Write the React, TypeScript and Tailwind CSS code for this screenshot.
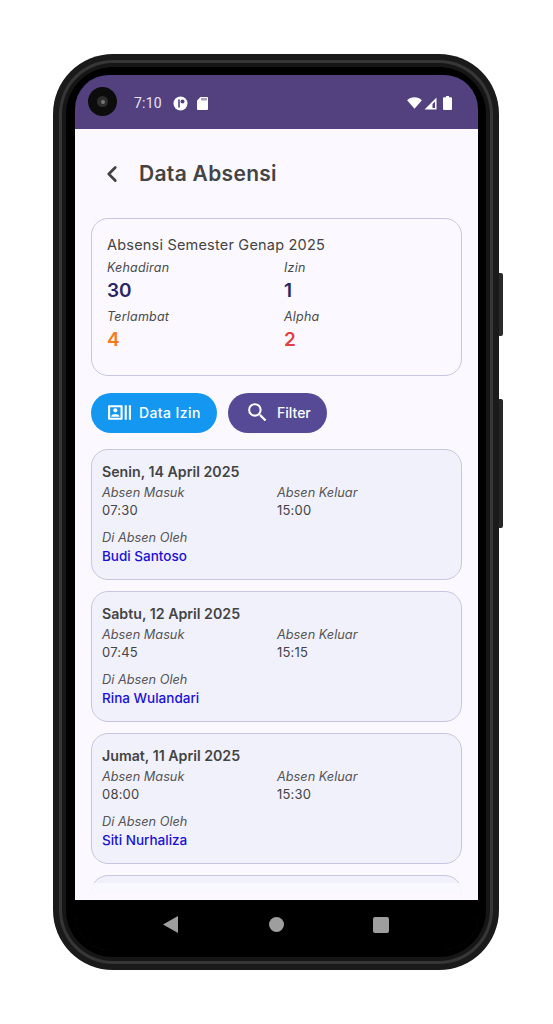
import { ChevronLeft } from 'lucide-react';
import { MdOutlineRecentActors, MdSearch } from 'react-icons/md';

const records = [
  { date: 'Senin, 14 April 2025', masuk: '07:30', keluar: '15:00', by: 'Budi Santoso' },
  { date: 'Sabtu, 12 April 2025', masuk: '07:45', keluar: '15:15', by: 'Rina Wulandari' },
  { date: 'Jumat, 11 April 2025', masuk: '08:00', keluar: '15:30', by: 'Siti Nurhaliza' },
];

function Stat({ label, value, color }: { label: string; value: string; color: string }) {
  return (
    <div className="h-[49px]">
      <div className="h-[20px] text-[12.5px] leading-[20px] italic text-[#4a4a4a] tracking-[0.2px]">{label}</div>
      <div className={`h-[26px] text-[19px] leading-[26px] font-semibold ${color}`}>{value}</div>
    </div>
  );
}

function StatusIcons() {
  return (
    <div className="flex items-center ml-auto mr-[26px]">
      <svg width="15" height="12" viewBox="0 0 16 13" fill="white">
        <path d="M0 3.6C2 1.6 5 .4 8 .4s6 1.2 8 3.2L8 12.6z" />
      </svg>
      <svg width="13" height="13" viewBox="0 0 13 13" fill="white" className="ml-[2px]">
        <path fillRule="evenodd" d="M12.5 .5V12.5H.5zM11 4.5 8.5 7V11H11z" />
      </svg>
      <svg width="9" height="14" viewBox="0 0 9 14" fill="white" className="ml-[6px]">
        <path d="M3 0h3v1.2h2a1 1 0 0 1 1 1V13a1 1 0 0 1-1 1H1a1 1 0 0 1-1-1V2.2a1 1 0 0 1 1-1h2z" />
      </svg>
    </div>
  );
}

export default function App() {
  return (
    <div className="h-[1024px] w-[553px] bg-white pt-[54px] pl-[53px] font-['Inter',sans-serif] overflow-hidden">
      <div className="relative w-[446px] h-[916px] rounded-[60px] bg-[#1a1a1a] p-[6px]">
        <div className="absolute right-[-4px] top-[219px] w-[4px] h-[63px] rounded-r-[2px] bg-[#2b2b2b]" />
        <div className="absolute right-[-4px] top-[345px] w-[4px] h-[129px] rounded-r-[2px] bg-[#262626]" />

        <div className="h-full w-full rounded-[54px] bg-[#363636] p-[3px]">
          <div className="h-full w-full rounded-[51px] bg-[#161616] p-[4px]">
            <div className="relative h-full w-full rounded-[47px] bg-black pt-[8px] pl-[9px] pr-[8px] pb-[7px]">
              <div className="relative h-full w-full rounded-[34px] overflow-hidden flex flex-col bg-[#1e1e1e]">
                {/* status bar */}
                <div className="h-[54px] shrink-0 bg-[#53407e] flex items-center pl-[59px] pt-[2px] text-white">
                  <span className="text-[14px] text-[#e8e4f2] font-['Roboto',sans-serif] tracking-[0.2px]">7:10</span>
                  <svg width="15" height="15" viewBox="0 0 15 15" className="ml-[11px]">
                    <circle cx="7.5" cy="7.5" r="7" fill="white" />
                    <path d="M6 3.5v8" stroke="#53407e" strokeWidth="1.6" />
                    <circle cx="9.5" cy="5.5" r="2" fill="#53407e" />
                  </svg>
                  <svg width="11" height="13" viewBox="0 0 11 13" fill="white" className="ml-[9px]">
                    <path d="M3.5 0H10a1 1 0 0 1 1 1v11a1 1 0 0 1-1 1H1a1 1 0 0 1-1-1V3.5z" />
                    <path d="M5 1v2.5M7 1v2.5M9 1v2.5" stroke="#53407e" strokeWidth="1" />
                  </svg>
                  <StatusIcons />
                </div>

                <div className="relative flex-1 min-h-0 flex flex-col bg-[#fbf9ff]">
                  {/* header */}
                  <div className="h-[89px] shrink-0 flex items-center pl-[24px]">
                    <ChevronLeft className="w-[26px] h-[26px] text-[#444444]" strokeWidth={2.6} />
                    <h1 className="ml-[14px] text-[21px] font-semibold text-[#444444] tracking-[0.3px]">Data Absensi</h1>
                  </div>

                  <div className="flex-1 px-[16px] overflow-hidden">
                    {/* summary */}
                    <div className="h-[158px] rounded-[17px] border border-[#c6c6e2] pl-[15px] pt-[14px]">
                      <div className="h-[24px] text-[14.5px] leading-[24px] text-[#444444] tracking-[0.2px]">Absensi Semester Genap 2025</div>
                      <div className="grid grid-cols-[177px_1fr] mt-[1px]">
                        <Stat label="Kehadiran" value="30" color="text-[#2a2565]" />
                        <Stat label="Izin" value="1" color="text-[#2a2565]" />
                        <Stat label="Terlambat" value="4" color="text-[#f47b20]" />
                        <Stat label="Alpha" value="2" color="text-[#e2403f]" />
                      </div>
                    </div>

                    {/* actions */}
                    <div className="flex gap-[11px] mt-[17px]">
                      <button className="w-[126px] h-[40px] rounded-full bg-[#1497f1] text-white flex items-center pl-[16px] pb-[2px] text-[14px] font-medium tracking-[0.4px]">
                        <MdOutlineRecentActors className="w-[25px] h-[25px]" />
                        <span className="ml-[7px]">Data Izin</span>
                      </button>
                      <button className="w-[99px] h-[40px] rounded-full bg-[#564a96] text-white flex items-center pl-[17px] pb-[2px] text-[14px] font-medium">
                        <MdSearch className="w-[25px] h-[25px]" />
                        <span className="ml-[7px]">Filter</span>
                      </button>
                    </div>

                    {/* records */}
                    <div className="mt-[16px] flex flex-col gap-[11px]">
                      {records.map((r) => (
                        <div key={r.date} className="h-[131px] rounded-[17px] border border-[#c6c6e2] bg-[#f1f1fc] pl-[10px] pt-[11px]">
                          <div className="h-[21px] text-[14.2px] leading-[21px] font-semibold text-[#444444]">{r.date}</div>
                          <div className="grid grid-cols-[175px_1fr] text-[12.75px]">
                            <div className="h-[20px] leading-[21px] italic text-[#555555]">Absen Masuk</div>
                            <div className="h-[20px] leading-[21px] italic text-[#555555]">Absen Keluar</div>
                            <div className="h-[17px] leading-[17px] text-[13px] text-[#444444] tracking-[0.2px]">{r.masuk}</div>
                            <div className="h-[17px] leading-[17px] text-[13px] text-[#444444] tracking-[0.2px]">{r.keluar}</div>
                          </div>
                          <div className="mt-[9px] h-[20px] text-[12.75px] leading-[20px] italic text-[#555555]">Di Absen Oleh</div>
                          <div className="h-[19px] text-[13.5px] leading-[17px] font-medium text-[#1a10d8]">{r.by}</div>
                        </div>
                      ))}
                      <div className="h-[60px] rounded-[17px] border border-[#c6c6e2] bg-[#f1f1fc]" />
                    </div>
                  </div>
                  <div className="absolute left-0 right-0 bottom-0 h-[17px] bg-gradient-to-t from-[#fbf9ff] to-[#fbf9ff]/85" />
                </div>

                {/* nav bar */}
                <div className="h-[50px] shrink-0 bg-black flex items-start pt-[16px] pl-[88px]">
                  <svg width="15" height="17" viewBox="0 0 16 18" fill="#9e9e9e"><path d="M16 0V18L0 9z" /></svg>
                  <div className="ml-[91px] w-[15px] h-[15px] rounded-full bg-[#9e9e9e] mt-[1px]" />
                  <div className="ml-[89px] w-[16px] h-[16px] rounded-[2px] bg-[#9e9e9e] mt-[1px]" />
                </div>
              </div>

              {/* camera */}
              <div className="absolute left-[22px] top-[20px] w-[29px] h-[29px] rounded-full bg-[#0c0c0c] flex items-center justify-center">
                <div className="w-[11px] h-[11px] rounded-full bg-[#2e2e2e] flex items-center justify-center">
                  <div className="w-[4px] h-[4px] rounded-full bg-[#777777]" />
                </div>
              </div>
            </div>
          </div>
        </div>
      </div>
    </div>
  );
}
